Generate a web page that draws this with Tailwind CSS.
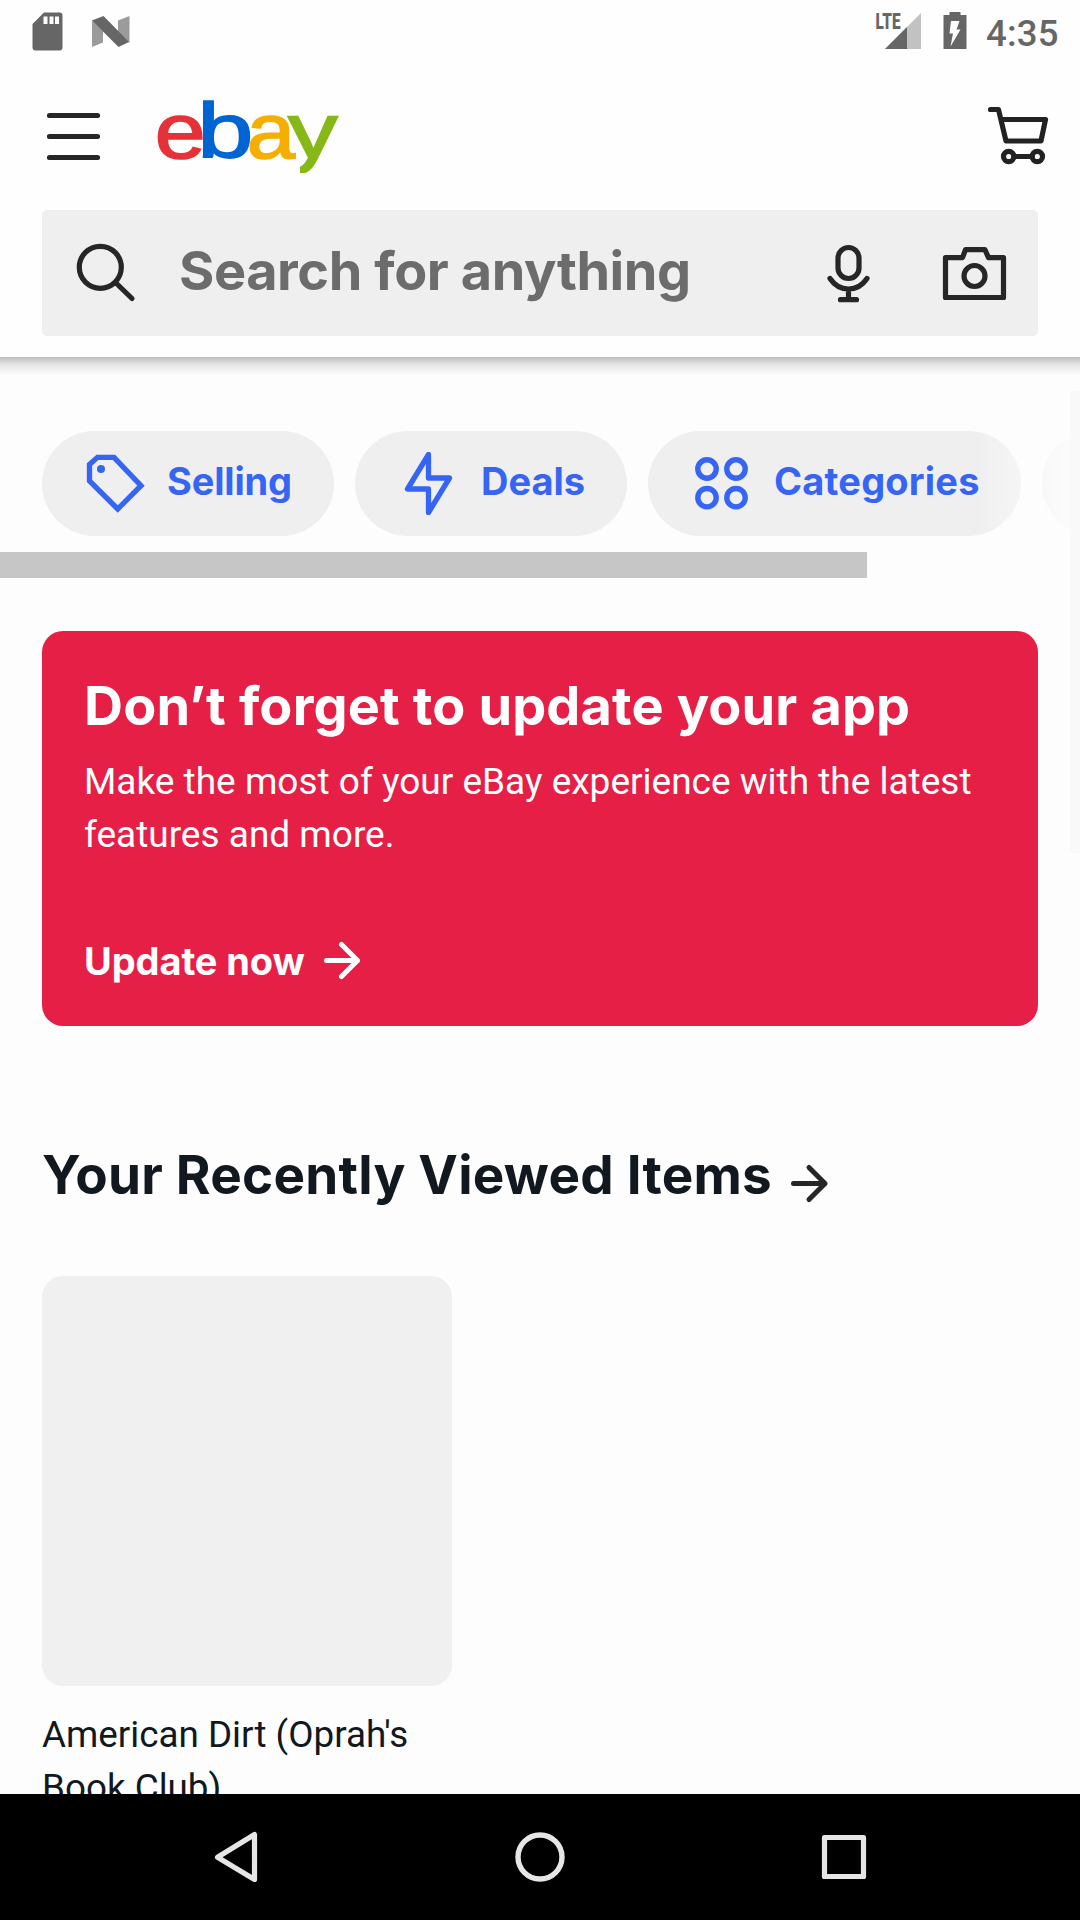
<!DOCTYPE html>
<html lang="en">
<head>
<meta charset="utf-8">
<title>eBay</title>
<script src="https://cdn.jsdelivr.net/npm/@tailwindcss/browser@4"></script>
</head>
<body class="w-[1080px] h-[1920px] overflow-hidden bg-[#fdfdfd] font-['Inter',sans-serif] text-[#111820]">
<div class="relative flex flex-col w-[1080px] h-[1920px] overflow-hidden">

  <header class="relative z-10 h-[357px] shrink-0 bg-[#fefefe]">
    <!-- status bar -->
    <div class="flex justify-between h-[63px] pl-8 pr-[21px]">
      <svg class="w-[100px] h-[63px]" viewBox="32 0 100 63">
        <path fill="#666" d="M44 12.500H59.500a3 3 0 0 1 3 3V47.500a3 3 0 0 1-3 3H35.500a3 3 0 0 1-3-3V24Z"/>
        <path fill="#fefefe" d="M43.500 16.500h4v7.500h-4zM49.500 16.500h4v7.500h-4zM55 16.500h4v7.500h-4z"/>
        <path fill="#9b9b9b" d="M92 20.500L103 31V42.500L92 47ZM118 20.500L129.500 16V43L118 32Z"/>
        <path fill="#666" d="M92 20.500L103.500 16L129 42L118.500 47Z"/>
      </svg>
      <div class="flex">
        <svg class="w-[111px] h-[63px]" viewBox="875 0 111 63">
          <path fill="#c2c2c2" d="M921 13V49H885Z"/>
          <path fill="#666" d="M907 27V49H885Z"/>
          <text x="875.500" y="29" textLength="25" lengthAdjust="spacingAndGlyphs" font-family="Roboto" font-weight="900" font-size="21.500" fill="#666">LTE</text>
          <path fill="#666" d="M943.500 15H949.500V12H960.500V15H966.500V49H943.500Z"/>
          <path fill="#fefefe" d="M951 21H959.500L956.500 29.500H960.500L950.500 46.500L953 33.500H949.500Z"/>
        </svg>
        <span class="mt-[13px] w-[73px] text-[36.5px] leading-[42px] font-medium tracking-[0.2px] text-[#666] font-['Roboto',sans-serif]">4:35</span>
      </div>
    </div>

    <!-- menu, logo, cart -->
    <div class="flex items-start h-[147px] pl-[47px] pr-[31px]">
      <svg class="w-[53px] h-[147px]" viewBox="47 63 53 147" stroke="#262626" stroke-width="5.200" stroke-linecap="round">
        <path d="M49.500 115.500H97.500M49.500 136.500H97.500M49.500 157.500H97.500"/>
      </svg>
      <svg class="ml-[54px] w-[192px] h-[147px]" viewBox="154 63 192 147" font-family="Liberation Sans, Arial, sans-serif" font-size="77" stroke-width="1.600">
        <clipPath id="tail"><path d="M280 90H346V173H300V150H280Z"/></clipPath>
        <text transform="translate(154.800 157.500) scale(1.19 1)" fill="#e53238" stroke="#e53238">e</text>
        <text transform="translate(197.200 157.500) scale(1.31 1)" fill="#0064d2" stroke="#0064d2">b</text>
        <text transform="translate(246.800 157.500) scale(1.13 1)" fill="#f5af02" stroke="#f5af02">a</text>
        <g clip-path="url(#tail)"><text transform="translate(288 157.500) scale(1.29 1)" fill="#86b817" stroke="#86b817">y</text></g>
      </svg>
      <svg class="ml-auto w-[63px] h-[147px]" viewBox="986 63 63 147" fill="none" stroke="#222" stroke-width="5.200" stroke-linecap="round" stroke-linejoin="round">
        <path d="M990.500 109.500H998.500L1006 141H1041L1045.500 119.500H1002"/>
        <circle cx="1008.700" cy="156.500" r="5.200"/><circle cx="1037.300" cy="156.500" r="5.200"/><path d="M1014 156.500H1032"/>
      </svg>
    </div>

    <!-- search -->
    <div class="flex items-center mx-[42px] h-[126px] rounded-[5px] bg-[#efefef]">
      <svg class="ml-[33px] w-[62px] h-[60px]" viewBox="75 243 62 60" fill="none" stroke="#262626" stroke-width="5.200" stroke-linecap="round">
        <circle cx="100.300" cy="267.300" r="21"/><path d="M116 283L132 298.500"/>
      </svg>
      <span class="ml-[42px] pb-[5px] w-[600px] text-[54px] leading-[64px] font-bold tracking-[-0.43px] text-[#6c6c6c] whitespace-nowrap">Search for anything</span>
      <svg class="ml-[45px] w-[48px] h-[60px]" viewBox="824 243 48 60" fill="none" stroke="#262626" stroke-width="5.200" stroke-linecap="round">
        <rect x="838" y="247.500" width="21" height="31" rx="10.500"/><path d="M830 278.500Q837 289 848.500 289T867 278.500M848.500 289V299.500M840.500 299.700H856.500"/>
      </svg>
      <svg class="ml-[70px] w-[66px] h-[60px]" viewBox="942 243 66 60" fill="none" stroke="#262626" stroke-width="5.200" stroke-linejoin="round">
        <path d="M945.500 257.700H962.500L965.500 249.700H985L988.500 257.700H1003.500V297.500H945.500Z"/><circle cx="974.500" cy="276" r="10.500"/>
      </svg>
    </div>
  </header>
  <div class="h-[18px] shrink-0 bg-linear-to-b from-[#bdbdbd] via-[#e4e4e4] via-40% to-[#fdfdfd]"></div>

  <!-- shortcut chips -->
  <nav class="relative flex h-[177px] shrink-0 pt-[56px] pl-[42px] gap-[21px] overflow-hidden text-[38px] leading-[44px] font-bold text-[#3665f3]">
    <a class="flex items-center w-[292px] h-[105px] shrink-0 rounded-full bg-[#efefef] pl-[42px]">
      <svg class="w-[63px] h-[63px]" viewBox="84 452 63 63" fill="none" stroke="#3665f3" stroke-width="5.300">
        <path d="M89.500 464.500L97.500 457.300H114L141 485.700L117.700 509L89.500 481Z"/><circle cx="101" cy="469" r="4" fill="#3665f3" stroke="none"/>
      </svg>
      <span class="ml-[20px] pb-[5px] tracking-[-0.18px]">Selling</span>
    </a>
    <a class="flex items-center w-[272px] h-[105px] shrink-0 rounded-full bg-[#efefef] pl-[42px]">
      <svg class="w-[63px] h-[63px]" viewBox="397 452 63 63" fill="none" stroke="#3665f3" stroke-width="5.300" stroke-linejoin="round">
        <path d="M428.500 454.500L407.500 489H428.500V512.500L449.500 478H428.500Z"/>
      </svg>
      <span class="ml-[21px] pb-[5px]">Deals</span>
    </a>
    <a class="flex items-center w-[373px] h-[105px] shrink-0 rounded-full bg-[#efefef] pl-[42px]">
      <svg class="w-[63px] h-[63px]" viewBox="690 452 63 63" fill="none" stroke="#3665f3" stroke-width="5.400">
        <circle cx="707" cy="469" r="9.200"/><circle cx="736" cy="469" r="9.200"/><circle cx="707" cy="497.700" r="9.200"/><circle cx="736" cy="497.700" r="9.200"/>
      </svg>
      <span class="ml-[21px] pb-[5px] tracking-[0.2px]">Categories</span>
    </a>
    <a class="w-[250px] h-[105px] shrink-0 rounded-full bg-[#efefef]"></a>
    <div class="absolute right-0 top-0 w-[105px] h-[177px] bg-linear-to-r from-[#fdfdfd]/0 to-[#fdfdfd]"></div>
  </nav>
  <div class="h-[26px] w-[867px] shrink-0 bg-[#c6c6c6]"></div>

  <!-- update banner -->
  <section class="mt-[53px] mx-[42px] h-[395px] shrink-0 rounded-[21px] bg-[#e61f47] pt-[45px] pl-[42px] text-white">
    <h2 class="text-[54px] leading-[60px] font-bold tracking-[0.14px] whitespace-nowrap">Don’t forget to update your app</h2>
    <p class="mt-[19px] text-[37px] leading-[53px] font-['Roboto',sans-serif] whitespace-nowrap">Make the most of your eBay experience with the latest<br>features and more.</p>
    <div class="mt-[80px] flex items-center h-10">
      <span class="text-[38px] leading-[40px] font-bold tracking-[-0.1px]">Update now</span>
      <svg class="ml-[17px] w-[40px] h-[40px]" viewBox="322 941 40 40" fill="none" stroke="#fff" stroke-width="5" stroke-linecap="round" stroke-linejoin="round">
        <path d="M326.500 960.500H357.500M341.500 944.500L357.500 960.500L341.500 976.500"/>
      </svg>
    </div>
  </section>

  <!-- recently viewed -->
  <section class="mt-[117px] px-[42px]">
    <div class="flex h-16">
      <h2 class="text-[53px] leading-[64px] font-bold tracking-[0.24px] whitespace-nowrap">Your Recently Viewed Items</h2>
      <svg class="ml-[17px] mt-5 w-[40px] h-[42px]" viewBox="789 1163 40 42" fill="none" stroke="#262626" stroke-width="5" stroke-linecap="round" stroke-linejoin="round">
        <path d="M793.500 1183.500H825M809 1167.500L825 1183.500L809 1199.500"/>
      </svg>
    </div>
    <div class="mt-[69px] w-[410px] h-[410px] rounded-[21px] bg-[#f0f0f0]"></div>
    <p class="mt-[22px] w-[410px] text-[36.8px] leading-[53px] font-['Roboto',sans-serif]">American Dirt (Oprah's Book Club)</p>
  </section>

  <!-- page scroll thumb -->
  <div class="absolute right-0 top-[391px] w-[10px] h-[462px] bg-[#f9f9f9]"></div>

  <!-- system navigation -->
  <footer class="absolute bottom-0 left-0 z-20 w-[1080px] h-[126px] bg-black flex items-center pl-[214px]">
    <svg class="w-[46px] h-[56px]" viewBox="214 1829 46 56" fill="none" stroke="#e6e6e6" stroke-width="5.200" stroke-linejoin="round"><path d="M254.500 1834.500V1879.500L217.500 1857.300Z"/></svg>
    <svg class="ml-[254px] w-[52px] h-[56px]" viewBox="514 1829 52 56" fill="none" stroke="#e6e6e6" stroke-width="5.400"><circle cx="540" cy="1857" r="22"/></svg>
    <svg class="ml-[254px] w-[48px] h-[56px]" viewBox="820 1829 48 56" fill="none" stroke="#e6e6e6" stroke-width="5.200" stroke-linejoin="round"><path d="M824.500 1837.500H863.500V1876.500H824.500Z"/></svg>
  </footer>
</div>
</body>
</html>
